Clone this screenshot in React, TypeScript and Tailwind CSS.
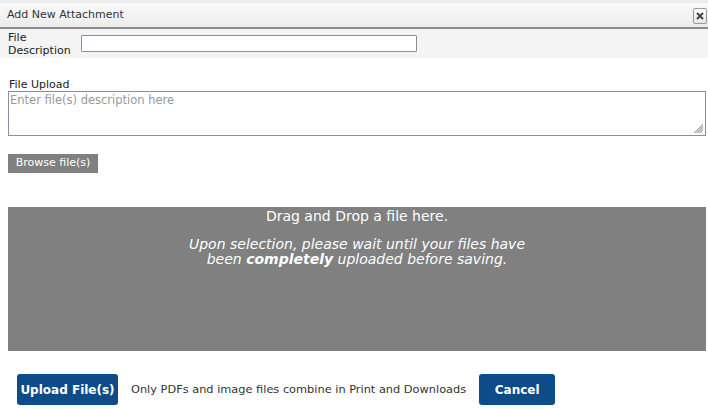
import React from 'react';

const font = { fontFamily: '"DejaVu Sans", Verdana, sans-serif' };

const App: React.FC = () => {
  return (
    <div className="w-[708px] h-[409px] bg-white text-[11px] text-[#222] overflow-hidden" style={font}>
      {/* Title bar */}
      <div className="h-[3px] bg-[#ececec]" />
      <div className="h-[26px] flex items-center justify-between pl-[7px] pr-[1px] bg-gradient-to-b from-[#fafafa] to-[#ececec] border-b-2 border-[#8c8c8c]">
        <span className="text-[11px] text-[#333]">Add New Attachment</span>
        <button className="w-[14px] h-[16px] mt-[1px] flex items-center justify-center border border-[#9a9a9a] rounded-[2px] bg-gradient-to-b from-white to-[#e6e6e6]">
          <svg width="8" height="8" viewBox="0 0 8 8">
            <path d="M1 1L7 7M7 1L1 7" stroke="#444" strokeWidth="2" />
          </svg>
        </button>
      </div>

      {/* Description row */}
      <div className="h-[29px] bg-[#f4f4f4] flex items-center pl-[8px]">
        <div className="w-[73px] leading-[13px] text-[11px] pt-[1px]">
          File<br />Description
        </div>
        <input className="w-[336px] h-[17px] bg-white border border-[#8e8aa0] rounded-[1px] outline-none" />
      </div>

      {/* Upload */}
      <div className="pl-[8px] pr-[2px] pt-[20px]">
        <div className="text-[11px] leading-[14px] mb-[-1px] ml-[1px]">File Upload</div>
        <div className="relative">
          <textarea
            placeholder="Enter file(s) description here"
            className="block w-full h-[45px] border border-[#8e8aa0] px-[1px] py-[1px] text-[11.5px] leading-[14px] resize-none outline-none placeholder:text-[#999]"
            style={font}
          />
          <svg className="absolute right-[2px] bottom-[2px]" width="12" height="12" viewBox="0 0 12 12">
            <path d="M11 2L2 11M11 5L5 11M11 8L8 11M11 3.5L3.5 11M11 6.5L6.5 11" stroke="#888" strokeWidth="0.8" />
          </svg>
        </div>

        <button className="mt-[18px] h-[19px] w-[90px] bg-[#808080] text-white text-[11px] flex items-center justify-center">
          Browse file(s)
        </button>

        {/* Drop zone */}
        <div className="mt-[34px] h-[144px] bg-[#808080] text-white flex flex-col items-center">
          <div className="text-[14px] leading-[16px] pt-[1px]">Drag and Drop a file here.</div>
          <div className="mt-[13px] text-[14px] leading-[15px] italic text-center">
            Upon selection, please wait until your files have
            <br />
            been <b>completely</b> uploaded before saving.
          </div>
        </div>
      </div>

      {/* Footer */}
      <div className="flex items-center pl-[17px] mt-[23px]">
        <button className="h-[31px] w-[101px] bg-[#0d4c89] text-white font-bold text-[12px] rounded-[3px]">
          Upload File(s)
        </button>
        <span className="ml-[13px] text-[11.35px] text-[#333]">Only PDFs and image files combine in Print and Downloads</span>
        <button className="ml-[13px] h-[31px] w-[76px] bg-[#0d4c89] text-white font-bold text-[12px] rounded-[3px]">
          Cancel
        </button>
      </div>
    </div>
  );
};

export default App;
